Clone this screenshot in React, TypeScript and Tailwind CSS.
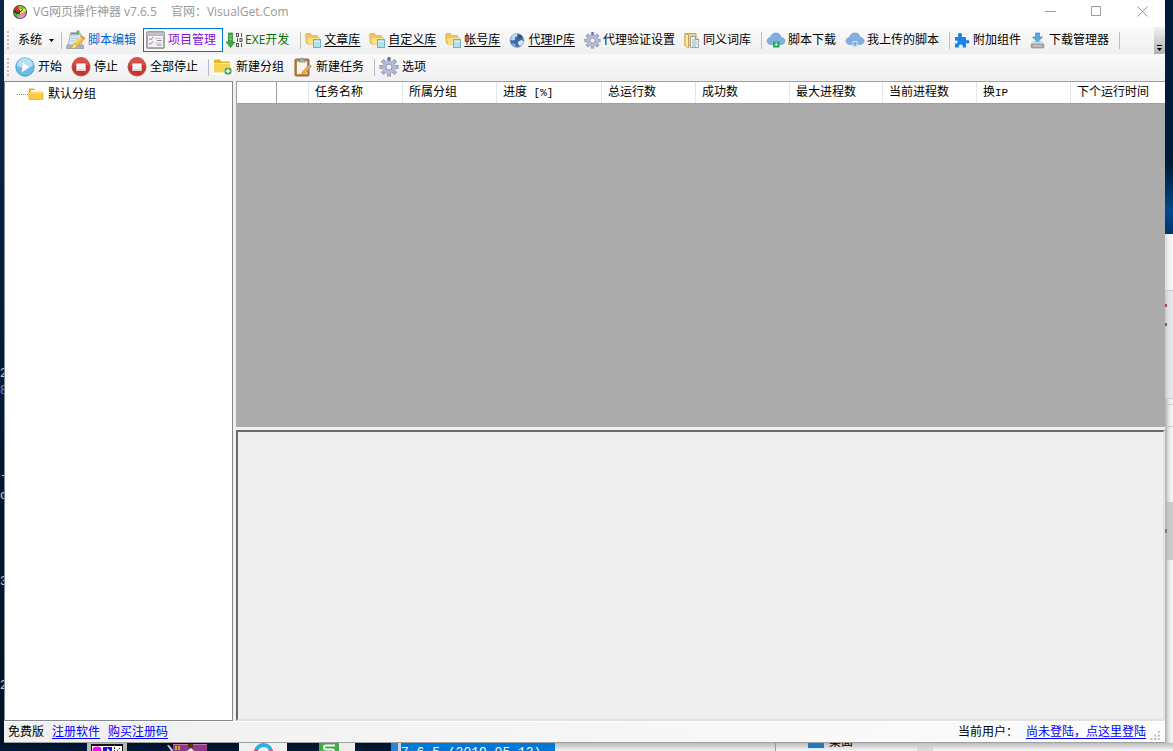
import React from "react";
import clsx from "clsx";

function AppLogo() {
  return (
    <svg className="h-4 w-4" viewBox="0 0 16 16">
      <circle cx="8" cy="8" r="7" fill="#3a3a30" />
      <path d="M2 6a6.500 6.500 0 0 1 5-4.500l1.500 4-3 4z" fill="#d42a38" />
      <path d="M7 1.500c3 0 5.500 1.500 6.500 4L8 7 6 4z" fill="#7fc02a" />
      <path d="M8 5.500l5.500-1 .5 3-6 3z" fill="#f6e63a" />
      <path d="M1.500 8l3 2 3-2-1 5.500C4 13.500 2 11 1.500 8z" fill="#3fbf38" />
      <path d="M5 11.500l9-3.500c0 4-3 6.500-6 6.500-1.500 0-2.500-1-3-3z" fill="#e987d4" />
      <path d="M2.500 6.500L6 9.500l5-4" stroke="#222" strokeWidth="1" fill="none" />
    </svg>
  );
}

function EditIcon() {
  return (
    <svg className="h-5 w-5 shrink-0" viewBox="0 0 20 20">
      <path d="M4.500 3l10 .5 1.500 13.500H2z" fill="#dcebf3" stroke="#a3b5c1" />
      <path d="M5 6h7M5 8.500h7M4.500 11h5" stroke="#b5cddb" />
      <path d="M1 15h16l1 3.500H.5z" fill="#a9b6bf" stroke="#8494a0" strokeWidth=".7" />
      <path d="M5 3.500h8" stroke="#7b8a94" strokeWidth="2" />
      <rect x="10.500" y="0.500" width="3" height="4" fill="#6eb35d" />
      <path d="M16 5.500l3 3-8.500 8.500-4.500 1.500 1.500-4.500z" fill="#f5c43c" stroke="#c8922b" strokeWidth=".7" />
      <path d="M7.500 14l3 3-4.500 1.500z" fill="#f6dfae" />
      <path d="M9 13l7.500-7" stroke="#fff0a6" />
      <path d="M16 5.500l3 3-1.500 1.500-3-3z" fill="#e59a53" />
    </svg>
  );
}

function ProjectIcon() {
  return (
    <svg className="h-5 w-5 shrink-0" viewBox="0 0 20 20">
      <rect x="0.500" y="1.500" width="18" height="17" rx="1.500" fill="#a9a9a9" stroke="#a2a2a2" />
      <path d="M2 6h15v11H2z" fill="#f2f2f2" />
      <path d="M1 2.500h17v3H1z" fill="#c2c2c2" />
      <path d="M3 8.500l1.500 1.500 2.500-3M3 13l1.500 1.500 2.500-3" stroke="#b45fc2" fill="none" />
      <path d="M9 8.500h6.500M9 13h6.500" stroke="#c6c6c6" />
      <path d="M11 10.500h4.500M11 15h4.500" stroke="#8c8c8c" />
    </svg>
  );
}

function ExeIcon() {
  return (
    <svg className="h-[17px] w-[17px] shrink-0" viewBox="0 0 17 17">
      <path d="M2.500 1h4v9h2.500L4.500 15.500 0 10h2.500z" fill="#3cae3c" stroke="#248b2a" strokeWidth=".7" />
      <path d="M3 4h3M3 7h3" stroke="#8bd77f" />
      <g fill="none" stroke="#555">
        <rect x="10.500" y="1.500" width="2" height="3" />
        <path d="M15.500 1v4M11.500 6v4" />
        <rect x="14" y="6.500" width="2" height="3" />
        <rect x="10.500" y="11.500" width="2" height="3" />
        <path d="M15.500 11v4" />
      </g>
    </svg>
  );
}

function LibraryIcon() {
  return (
    <svg className="h-[17px] w-[17px] shrink-0" viewBox="0 0 17 17">
      <path d="M.5 2.500l1-1h4l1 2h6v8H1.500z" fill="#efc45d" stroke="#dfb14b" strokeWidth=".8" />
      <path d="M2 5.500h12.500l-1.500 7H2.500z" fill="#ffdf87" stroke="#e8bc58" strokeWidth=".6" />
      <rect x="8.500" y="7.500" width="7" height="8" fill="#b3e0f0" stroke="#72b2c9" />
      <path d="M9 9.500h6" stroke="#e0f6ff" />
    </svg>
  );
}

function GlobeIcon() {
  return (
    <svg className="h-[17px] w-[17px] shrink-0" viewBox="0 0 17 17">
      <circle cx="8" cy="8.500" r="7" fill="#3c6ca8" stroke="#a4b2c4" />
      <path d="M3 4c2-3 5-2.500 5-2.500L8.500 4 6 5.500 6 8 3 8.500 1.500 7z" fill="#bdd6ef" />
      <path d="M9 10l3-2 2.500 1c0 3-2 4-3.500 5L9 12z" fill="#d5e5f4" />
      <path d="M3 11l3 1 1 3c-2 0-3.500-2-4-4z" fill="#8db3dc" />
      <path d="M9 3l3 0 1 2-3 1z" fill="#1d457d" />
    </svg>
  );
}

function GearIcon({ className }: { className: string }) {
  return (
    <svg className={clsx("shrink-0", className)} viewBox="0 0 20 20">
      <g stroke="#8c93ae" strokeWidth="4">
        <path d="M10 .5v19M.5 10h19M3.300 3.300l13.400 13.400M16.700 3.300L3.300 16.700" />
      </g>
      <g stroke="#adb3cc" strokeWidth="2.600">
        <path d="M10 1v18M1 10h18M3.800 3.800l12.400 12.400M16.200 3.800L3.800 16.200" />
      </g>
      <circle cx="10" cy="10" r="6.800" fill="#b6bbd3" />
      <circle cx="10" cy="10" r="3" fill="#f0f1f5" stroke="#9299b5" />
      <path d="M9 0h2v4H9z" fill="#66769c" />
    </svg>
  );
}

function SynonymIcon() {
  return (
    <svg className="h-[17px] w-[17px] shrink-0" viewBox="0 0 17 17">
      <path d="M1 1.500h11v12H1z" fill="#f4cf7a" stroke="#d3a450" />
      <path d="M1 1.500l3.500 1.500v13L1 13.500z" fill="#ffe6a5" stroke="#c8963c" strokeWidth=".8" />
      <path d="M6.500 4.500h5l3 3v8h-8z" fill="#eef5f6" stroke="#9cabab" />
      <path d="M8 8h4M8 10h5M8 12h5M8 14h4" stroke="#9db5c0" />
      <path d="M11.500 4.500v3h3" stroke="#8b9b9b" fill="none" />
    </svg>
  );
}

function CloudIcon({ upload }: { upload?: boolean }) {
  return (
    <svg className="h-5 w-5 shrink-0" viewBox="0 0 20 20">
      <path
        d="M5 14.500C2.500 14.500 1 13 1 11s1.500-3.500 3.500-3.500C5 4.500 7 3 10 3s5 2 5 4.500c2.500 0 4 1.500 4 3.500s-1.500 3.500-4 3.500z"
        fill="#82afe0"
        stroke="#709fd2"
        strokeWidth=".7"
      />
      {upload ? (
        <>
          <path d="M7.500 11h5v6h-5z" fill="#c4dcf3" />
          <path d="M10 16v-3M8.500 14L10 12.500l1.500 1.500" stroke="#5383b8" fill="none" />
        </>
      ) : (
        <>
          <path d="M7 11.500h6.500v6H7z" fill="#1caa56" />
          <path d="M10.200 12v3.500M8.500 14l1.700 1.700L12 14" stroke="#d7f5df" fill="none" />
        </>
      )}
    </svg>
  );
}

function PuzzleIcon() {
  return (
    <svg className="h-[17px] w-[17px] shrink-0" viewBox="0 0 17 17">
      <path
        d="M1 5h3.500c-1.500-2.500 0-4 1.500-4s3 1.500 1.500 4H12v3.500c1.500-1 3.500-.5 3.500 1.200s-2 2.300-3.500 1.300V15.500H8.500c1-2-.3-3-1.700-3s-2.600 1-1.600 3H1v-4.300c1.500 1 2.700 0 2.700-1.200S2.500 8 1 9z"
        fill="#1c83e6"
      />
    </svg>
  );
}

function DownloadIcon() {
  return (
    <svg className="h-[17px] w-[17px] shrink-0" viewBox="0 0 17 17">
      <path d="M5.500 1h4v4h3l-5 5-5-5h3z" fill="#54a9de" stroke="#3a8dc5" strokeWidth=".7" />
      <path d="M3 9.500h9l2 2.500H1z" fill="#e2e2e2" stroke="#c2c2c2" strokeWidth=".6" />
      <path d="M4 9.500h7L7.500 10.500z" fill="#54a9de" />
      <rect x="1" y="12" width="13" height="4" rx="1" fill="#a6a6a6" stroke="#8a8a8a" strokeWidth=".6" />
      <path d="M3 14h9" stroke="#dedede" />
    </svg>
  );
}

function PlayIcon() {
  return (
    <svg className="h-5 w-5 shrink-0" viewBox="0 0 20 20">
      <circle cx="10" cy="10" r="9.200" fill="#67bde9" stroke="#3b8fc2" strokeWidth=".8" />
      <path d="M2 9a8 8 0 0 1 16 0c-5 2-11 2-16 0z" fill="#b5e0f6" />
      <path d="M7 4.500L15 10l-8 5.500z" fill="#fff" stroke="#8fc5e0" strokeWidth=".5" />
    </svg>
  );
}

function StopIcon() {
  return (
    <svg className="h-5 w-5 shrink-0" viewBox="0 0 20 20">
      <circle cx="10" cy="10" r="9" fill="#c93530" stroke="#ad5854" />
      <path d="M2 8a8 8 0 0 1 16 0c-5 2-11 2-16 0z" fill="#de4f49" />
      <rect x="5" y="6" width="10" height="8" rx="1" fill="#f7f4f4" stroke="#a33" strokeWidth=".6" />
      <path d="M5.500 12h9v2h-9z" fill="#ddd3d3" />
    </svg>
  );
}

function NewGroupIcon() {
  return (
    <svg className="h-5 w-5 shrink-0" viewBox="0 0 20 20">
      <path d="M0 0h20v18H0z" fill="#fff" />
      <path d="M1 2.500h6l1.500 2H17V15H1z" fill="#e6b829" />
      <path d="M1 6h16.500v9.500H1z" fill="#fad14b" />
      <path d="M1 6.500h16" stroke="#ffe78d" />
      <circle cx="15" cy="14" r="4" fill="#3c9f3e" stroke="#e3f1dc" strokeWidth=".7" />
      <path d="M15 11.700v4.600M12.700 14h4.600" stroke="#fff" strokeWidth="1.500" />
    </svg>
  );
}

function NewTaskIcon() {
  return (
    <svg className="h-5 w-5 shrink-0" viewBox="0 0 20 20">
      <rect x="2" y="2" width="14" height="17" rx="1" fill="#b98748" stroke="#8f6536" />
      <path d="M4 4.500h10V17H4z" fill="#f5f3ed" />
      <path d="M10 17l4-4v4z" fill="#d5d1c7" />
      <path d="M6 2.500h1.500a1.500 1.500 0 0 1 3 0H12V5H6z" fill="#b0b0b0" stroke="#777" strokeWidth=".6" />
      <path d="M16.500 7.500l2 2-7 7-3 1 1-3z" fill="#f3ad38" stroke="#bd7924" strokeWidth=".5" />
      <path d="M16.500 7.500l2 2-1.500 1.500-2-2z" fill="#d695b6" />
    </svg>
  );
}

function Grip() {
  return (
    <svg className="ml-[3px] h-6 w-[3px] shrink-0" viewBox="0 0 3 24">
      {[3, 7, 11, 15, 19].map((y) => (
        <rect key={y} x="0" y={y} width="2" height="2" fill="#c3c3c3" />
      ))}
    </svg>
  );
}

function Separator() {
  return <div className="mt-1 mr-px ml-1 h-[17px] w-px shrink-0 bg-[#bdbdbd]" />;
}

type ToolProps = {
  icon: React.ReactNode;
  label: string;
  color?: string;
  active?: boolean;
  wide?: boolean;
  underline?: boolean;
};

function Tool({ icon, label, color = "text-black", active, wide, underline }: ToolProps) {
  return (
    <button
      type="button"
      className={clsx(
        "flex h-6 shrink-0 items-center border pl-0.5 whitespace-nowrap",
        wide ? "gap-[3px]" : "gap-0.5",
        color === "text-black" ? "pr-[5px]" : "pr-1.5",
        active ? "border-[#0078d7] bg-[#f9f9f9]" : "border-transparent hover:border-[#0078d7]",
        color
      )}
    >
      {icon}
      <span className={clsx(underline && "underline underline-offset-2")}>{label}</span>
    </button>
  );
}

const columns = [
  { title: "", width: "w-10" },
  { title: "", width: "w-8" },
  { title: "任务名称", width: "w-[94px]" },
  { title: "所属分组", width: "w-[94px]" },
  { title: "进度 [%]", width: "w-[105px]" },
  { title: "总运行数", width: "w-[94px]" },
  { title: "成功数", width: "w-[94px]" },
  { title: "最大进程数", width: "w-[93px]" },
  { title: "当前进程数", width: "w-[94px]" },
  { title: "换IP", width: "w-[94px]" },
  { title: "下个运行时间", width: "" },
];

function ColumnTitle({ title }: { title: string }) {
  // latin characters take half of the width of a Chinese one
  return (
    <>
      {title.split(/([ -~]+)/).map((part, i) =>
        i % 2 ? (
          <span key={i} className="font-['Liberation_Mono'] text-[11px] leading-3 whitespace-pre">
            {part}
          </span>
        ) : (
          part
        )
      )}
    </>
  );
}

function TitleBar() {
  return (
    <header className="flex h-[27px] shrink-0 items-start bg-white">
      <div className="flex h-[23px] flex-1 items-center gap-[5px] pl-2 text-[#999]">
        <AppLogo />
        <h1 className="flex gap-3.5 whitespace-nowrap">
          <span>VG网页操作神器 v7.6.5</span>
          <span>官网：VisualGet.Com</span>
        </h1>
      </div>
      <div className="flex text-[#999]">
        <button type="button" aria-label="最小化" className="grid h-[23px] w-[46px] place-items-center">
          <svg className="h-[11px] w-[11px]" viewBox="0 0 11 11">
            <path d="M0 5.500h11" stroke="currentColor" />
          </svg>
        </button>
        <button type="button" aria-label="最大化" className="grid h-[23px] w-[46px] place-items-center">
          <svg className="h-[11px] w-[11px]" viewBox="0 0 11 11">
            <path d="M.5.5h9v9h-9z" fill="none" stroke="currentColor" />
          </svg>
        </button>
        <button type="button" aria-label="关闭" className="grid h-[23px] w-[46px] place-items-center">
          <svg className="h-[11px] w-[11px]" viewBox="0 0 11 11">
            <path d="M.5.5l10 10M10.500.5l-10 10" stroke="currentColor" />
          </svg>
        </button>
      </div>
    </header>
  );
}

function MainToolbar() {
  return (
    <nav className="flex h-[27px] shrink-0 bg-linear-to-b from-[#fafafa] to-[#f0f0f0]">
      <div className="flex min-w-0 flex-1 items-start overflow-hidden pt-px">
        <Grip />
        <button type="button" className="ml-2 flex h-6 shrink-0 items-center gap-[7px] pr-[3px]">
          系统
          <svg className="h-[3px] w-[5px]" viewBox="0 0 5 3">
            <path d="M0 0h5L2.500 3z" />
          </svg>
        </button>
        <Separator />
        <Tool icon={<EditIcon />} label="脚本编辑" color="text-[#0066cc]" />
        <Tool icon={<ProjectIcon />} label="项目管理" color="text-[#8a12d8]" active />
        <Tool icon={<ExeIcon />} label="EXE开发" color="text-[#067006]" />
        <Separator />
        <Tool icon={<LibraryIcon />} label="文章库" underline />
        <Tool icon={<LibraryIcon />} label="自定义库" underline />
        <Tool icon={<LibraryIcon />} label="帐号库" underline />
        <Tool icon={<GlobeIcon />} label="代理IP库" underline />
        <Tool icon={<GearIcon className="h-[17px] w-[17px]" />} label="代理验证设置" />
        <Tool icon={<SynonymIcon />} label="同义词库" />
        <Separator />
        <Tool icon={<CloudIcon />} label="脚本下载" />
        <Tool icon={<CloudIcon upload />} label="我上传的脚本" />
        <Separator />
        <Tool icon={<PuzzleIcon />} label="附加组件" />
        <Tool icon={<DownloadIcon />} label="下载管理器" />
        <Separator />
      </div>
      <button
        type="button"
        aria-label="更多"
        className="flex w-[11px] flex-col items-center justify-end rounded-r-xs bg-linear-to-b from-[#f2f2f2] to-[#b0b0b0] pb-[3px]"
      >
        <svg className="h-[6px] w-[5px]" viewBox="0 0 5 6">
          <path d="M0 0h5v1H0zM0 3h5L2.500 6z" />
        </svg>
      </button>
    </nav>
  );
}

function TaskToolbar() {
  return (
    <nav className="flex h-[27px] shrink-0 items-start overflow-hidden bg-linear-to-b from-[#fafafa] to-[#f0f0f0] pt-px">
      <Grip />
      <div className="ml-0.5 flex items-start">
        <Tool icon={<PlayIcon />} label="开始" wide />
        <Tool icon={<StopIcon />} label="停止" wide />
        <Tool icon={<StopIcon />} label="全部停止" wide />
        <Separator />
        <Tool icon={<NewGroupIcon />} label="新建分组" wide />
        <Tool icon={<NewTaskIcon />} label="新建任务" wide />
        <Separator />
        <Tool icon={<GearIcon className="h-5 w-5" />} label="选项" wide />
      </div>
    </nav>
  );
}

function GroupTree() {
  return (
    <aside className="w-[229px] shrink-0 border border-[#828790] bg-white">
      <ul className="pt-[3px]">
        <li className="flex h-[18px] items-center">
          <span className="ml-3 w-[11px] border-t border-dotted border-[#888]" />
          <svg className="h-4 w-4" viewBox="0 0 16 16">
            <path d="M1 2.500h5l1.500 2H14v9H1z" fill="#e8a92c" />
            <path d="M3 4h11v4H3z" fill="#fff5d0" />
            <path d="M.5 6.500h14.500v7H1z" fill="#fcc93e" stroke="#e2a42c" strokeWidth=".6" />
            <path d="M1 7h13.500" stroke="#ffe795" />
          </svg>
          <span className="ml-1">默认分组</span>
        </li>
      </ul>
    </aside>
  );
}

function TaskTable() {
  return (
    <div className="min-h-0 overflow-hidden bg-[#ababab]">
      <table className="w-full table-fixed border-collapse bg-white">
        <thead>
          <tr className="h-[21px]">
            {columns.map((col, i) => (
              <th
                key={i}
                className={clsx(
                  "border-b border-b-[#a0a0a0] p-0 pl-[6px] text-left font-normal whitespace-nowrap",
                  col.width,
                  i === 0 && "border-x border-x-[#a0a0a0]",
                  i > 0 && i < columns.length - 1 && "border-r border-r-[#e5e5e5]"
                )}
              >
                <ColumnTitle title={col.title} />
              </th>
            ))}
          </tr>
        </thead>
      </table>
    </div>
  );
}

function StatusBar() {
  return (
    <footer className="flex h-[21px] shrink-0 items-center gap-2 border-t border-white bg-linear-to-r from-[#f0f0f0] to-[#fcfcfc] pl-1">
      <span>免费版</span>
      <a href="#" className="text-[#0000ff] underline underline-offset-2">注册软件</a>
      <a href="#" className="text-[#0000ff] underline underline-offset-2">购买注册码</a>
      <span className="ml-auto">当前用户：</span>
      <a href="#" className="text-[#0000ff] underline underline-offset-2">尚未登陆，点这里登陆</a>
      <svg className="-ml-1 h-[11px] w-[15px] self-end pb-px" viewBox="0 0 15 11">
        <path d="M8 0h2v2H8zM4 4h2v2H4zM8 4h2v2H8zM0 8h2v2H0zM4 8h2v2H4zM8 8h2v2H8z" fill="#b0b0b0" />
      </svg>
    </footer>
  );
}

// parts of other windows that show past the right edge
function DesktopRight() {
  return (
    <div className="flex flex-col overflow-hidden bg-[#f3f3f3] shadow-[inset_4px_0_4px_-2px_#00000055]">
      <div className="h-[234px] bg-linear-to-b from-[#001c38] from-70% via-[#004a8c] via-90% to-[#00356b]" />
      <div className="h-14 bg-[#f8f8f8]/60" />
      <div className="flex h-[109px] flex-col gap-4 border-y border-[#c8c8c8] bg-[#dde0e4]/60 pt-[13px]">
        <span className="h-[3px] w-0.5 bg-[#b34a4a]" />
        <span className="h-[3px] w-0.5 bg-[#b34a4a]" />
      </div>
      <div className="h-[6px] border-b border-[#c8c8c8]" />
      <div className="h-[22px] border-b border-[#c8c8c8]" />
      <div className="h-[75px]" />
      <div className="flex h-[58px] items-center bg-[#b9b9b9]/70">
        <span className="h-1 w-0.5 bg-[#5b8794]" />
      </div>
    </div>
  );
}

function DesktopBottom() {
  return (
    <div className="col-span-3 flex overflow-hidden bg-[#001a38] shadow-[inset_0_4px_4px_-2px_#00000066]">
      <div className="w-[87px] shrink-0" />
      <svg className="h-2 w-10 shrink-0" viewBox="0 0 40 8">
        <path d="M0 0h40v8H0z" fill="#b7b7b7" />
        <path d="M4 1h32v7H4z" fill="#111" />
        <path d="M5 3h30v5H5z" fill="#fff" />
        <ellipse cx="10" cy="6.500" rx="4.500" ry="3" fill="#f0f" />
        <path d="M16 4h9v4h-9z" fill="#1717d8" />
        <path d="M20 5l3 3h-3z" fill="#fff" />
        <path d="M27.500 1v7M33 5l-3 3" stroke="#333" strokeDasharray="2 1" />
      </svg>
      <div className="w-10 shrink-0" />
      <svg className="h-2 w-10 shrink-0" viewBox="0 0 40 8">
        <path d="M0 2h2l5 6H4z" fill="#c4c4d8" />
        <path d="M6 1h34v7H6z" fill="#8b3c87" />
        <path d="M6 1h34v1H6z" fill="#c86cb6" />
        <path d="M8 3h2v4H8zM11 3h2v4h-2z" fill="#c5a630" />
        <path d="M21 1h5v4h-5z" fill="#56321c" />
        <path d="M20 8l4-3 3 3z" fill="#eee" />
      </svg>
      <div className="w-8 shrink-0" />
      <svg className="h-2 w-12 shrink-0" viewBox="0 0 48 8">
        <path d="M0 0h48v8H0z" fill="#f0f0f0" />
        <path d="M17 8a8 7 0 0 1 7-6 8 7 0 0 1 8 6" fill="none" stroke="#2ab2dc" strokeWidth="4" />
        <path d="M15 7h4v1h-4zM30 7h4v1h-4z" fill="#ee4d55" />
      </svg>
      <div className="w-8 shrink-0" />
      <svg className="h-2 w-9 shrink-0" viewBox="0 0 36 8">
        <path d="M0 0h36v8H0z" fill="#ececec" />
        <path d="M0 0h20v8H0z" fill="#3fac45" />
        <path d="M16 2.500H7q-2 0-2 2t2 2h6q2 0 2 2" stroke="#fff" strokeWidth="2" fill="none" />
      </svg>
      <div className="w-9 shrink-0" />
      <div className="w-[7px] shrink-0 bg-[#2a83dc]" />
      <div className="w-[3px] shrink-0 bg-[#d5d5d5]" />
      <div className="h-2 w-[154px] shrink-0 overflow-hidden bg-[#0078d7] pt-0.5 font-['Liberation_Mono'] text-[13px] leading-4 whitespace-nowrap text-white">
        7.6.5 (2019-05-12)
      </div>
      <div className="w-[220px] shrink-0 bg-linear-to-b from-[#bbb] to-[#f2f2f2]" />
      <div className="flex flex-1 items-start border-l border-[#999] bg-linear-to-b from-[#bbb] to-[#fafafa] pl-8">
        <span className="h-[5px] w-4 bg-[#1b7fbd]" />
        <span className="ml-[5px] flex h-[5px] items-end overflow-hidden leading-3">桌面</span>
        <span className="ml-16 h-2 w-4 bg-[#cdcdcd]/60" />
      </div>
    </div>
  );
}

export default function App() {
  return (
    <div className="grid h-screen grid-cols-[4px_minmax(0,1fr)_8px] grid-rows-[minmax(0,1fr)_8px] overflow-hidden font-['Open_Sans','Noto_Sans_CJK_SC',sans-serif] text-[12px] leading-4 text-black">
      <div className="relative overflow-hidden bg-linear-to-b from-[#0b2a48] via-[#001c38] to-[#001429] font-['Liberation_Mono'] text-white/80">
        <span className="absolute top-[366px] left-0">2</span>
        <span className="absolute top-[383px] left-0 text-[#6688ff]">8</span>
        <span className="absolute top-[468px] left-0">-</span>
        <span className="absolute top-[488px] left-0">c</span>
        <span className="absolute top-[574px] left-0">3</span>
        <span className="absolute top-[678px] left-0">2</span>
      </div>

      <div className="flex min-w-0 flex-col border-b border-[#a0a0a0] bg-[#f0f0f0]">
        <TitleBar />
        <MainToolbar />
        <TaskToolbar />
        <main className="flex min-h-0 flex-1">
          <GroupTree />
          <div className="ml-[3px] grid min-w-0 flex-1 grid-rows-[346fr_291fr] gap-[3px] border-t border-[#a0a0a0]">
            <TaskTable />
            <section
              aria-label="日志"
              className="border-2 border-t-[#696969] border-r-[#e3e3e3] border-b-[#e3e3e3] border-l-[#696969] bg-[#efefef]"
            />
          </div>
        </main>
        <StatusBar />
      </div>

      <DesktopRight />
      <DesktopBottom />
    </div>
  );
}
